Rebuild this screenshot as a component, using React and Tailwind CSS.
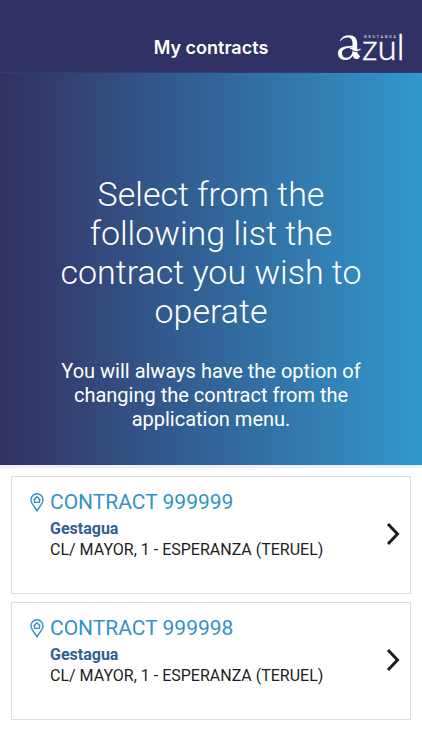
const contracts = [
  { id: "999999", company: "Gestagua", address: "CL/ MAYOR, 1 - ESPERANZA (TERUEL)" },
  { id: "999998", company: "Gestagua", address: "CL/ MAYOR, 1 - ESPERANZA (TERUEL)" },
];

function Logo() {
  return (
    <svg viewBox="0 0 68 28" className="h-7 w-[68px] overflow-visible" fill="#ffffff" role="img" aria-label="Gestagua azul">
      <path d="M2 6.500C3.500 3 7 1.200 11 1.200C16.600 1.200 19.200 4.500 19.200 9.500V14.500C19.200 18.500 20 21 22.200 22C21.600 24.200 20 25.300 18.300 25.100C16.200 24.800 15.200 23.600 14.900 21.800C13.200 24.600 10.600 26 7.400 26C3 26 0 23.500 0 19.200C0 14.500 4.500 11.800 14.500 11.700V9.600C14.500 5.900 13.300 4 10.500 3.500C7 3 4.200 5 2.600 7ZM14.500 13.600C7.400 13.800 4 15.500 4 19.200C4 22.200 6.100 23.800 8.500 23.800C11.800 23.800 14.500 20.800 14.500 16.800Z" />
      <path d="M12 14.200C16 14.500 18 18.500 22.500 15" fill="none" stroke="#ffffff" strokeWidth="1.500" />
      <path d="M12 16C16 16.300 18 19.600 22.500 16.600" fill="none" stroke="#303164" strokeWidth="0.900" />
      <text x="24" y="26" fontFamily="Lato, sans-serif" fontWeight="300" fontSize="35" stroke="#ffffff" strokeWidth="0.500">zul</text>
      <text x="26" y="4" fontFamily="Roboto, sans-serif" fontSize="4" letterSpacing="1.700">GESTAGUA</text>
    </svg>
  );
}

function PinIcon() {
  return (
    <svg viewBox="0 0 14 19" className="h-[19px] w-3.5 shrink-0" fill="none" stroke="#3193c5" strokeWidth="1.400" strokeLinejoin="round" aria-hidden="true">
      <path d="M7 18C5.500 14.500 1 11 1 6.800A6 6 0 0 1 13 6.800C13 11 8.500 14.500 7 18Z" />
      <path d="M3.600 6.900L7 3.700L10.400 6.900M4.500 6V9.400H9.500V6" />
    </svg>
  );
}

function ContractCard({ contract }) {
  return (
    <li>
      <button
        type="button"
        className="flex w-full items-center border border-[#dedede] bg-white pt-[9px] pr-2.5 pb-[33px] pl-[18px] text-left"
      >
        <span className="grid flex-1 grid-cols-[auto_1fr] gap-x-1.5">
          <span className="flex items-center">
            <PinIcon />
          </span>
          <span className="text-[21px] leading-8 text-[#3193c5]">CONTRACT {contract.id}</span>
          <span className="col-start-2 text-base leading-[21px] font-bold text-[#315f93]">{contract.company}</span>
          <span className="col-start-2 text-base leading-[21px] text-[#1d1d1f]">{contract.address}</span>
        </span>
        <svg viewBox="0 0 14 24" className="mt-[22px] h-6 w-3.5 shrink-0" fill="none" stroke="#1d1d1f" strokeWidth="3" aria-hidden="true">
          <path d="M2 2L11.500 12L2 22" />
        </svg>
      </button>
    </li>
  );
}

export default function App() {
  return (
    <div className="min-h-screen bg-white font-[Roboto,sans-serif]">
      <header className="grid grid-cols-[1fr_auto_1fr] items-center border-b border-[#2c3f75] bg-[#303164] px-4 pt-[34px] pb-2.5">
        <h1 className="col-start-2 font-[Inter,sans-serif] text-lg leading-7 font-semibold text-white">My contracts</h1>
        <div className="justify-self-end">
          <Logo />
        </div>
      </header>
      <main>
        <section className="bg-linear-to-r from-[#323063] via-[#315f93] via-45% to-[#3098cc] px-12 pt-[102px] pb-[34px] text-center text-white">
          <h2 className="text-[34px] leading-[39px] font-light">
            Select from the following list the contract you wish to operate
          </h2>
          <p className="pt-7 text-xl leading-6">
            You will always have the option of changing the contract from the application menu.
          </p>
        </section>
        <ul className="flex flex-col gap-2 border-t-3 border-[#edf0fa] px-[11px] pt-2 pb-7">
          {contracts.map((contract) => (
            <ContractCard key={contract.id} contract={contract} />
          ))}
        </ul>
      </main>
    </div>
  );
}
